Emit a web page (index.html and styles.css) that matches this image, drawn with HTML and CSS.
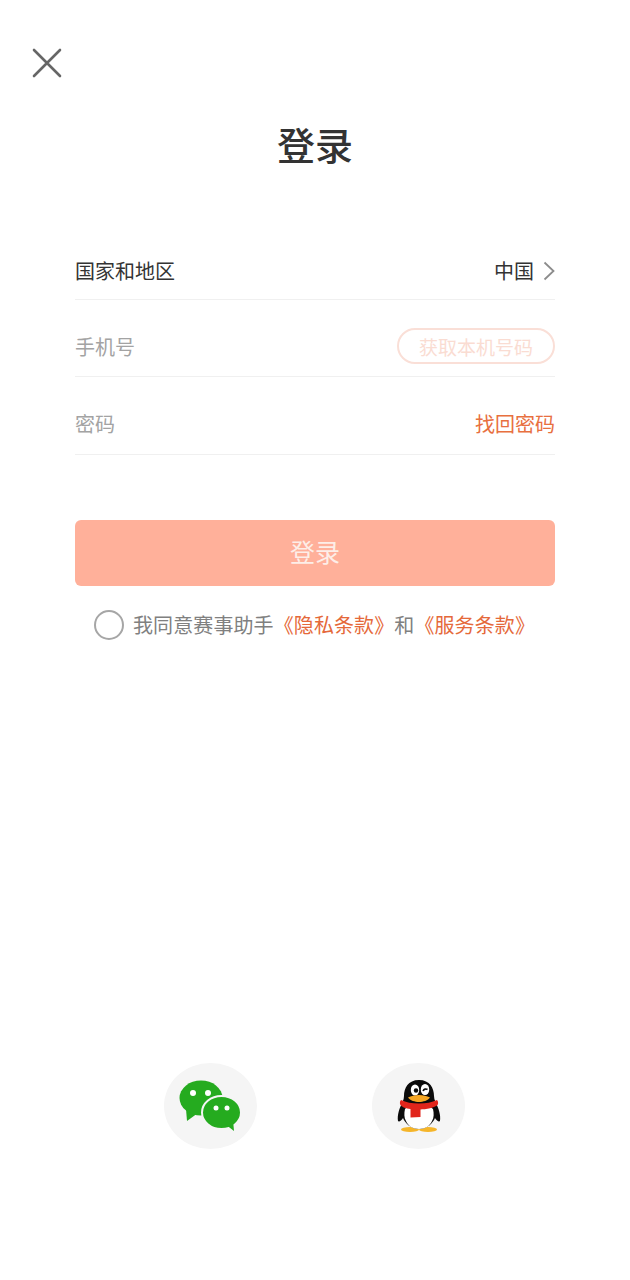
FILE: index.html
```html
<!DOCTYPE html>
<html lang="zh-CN">
<head>
  <meta charset="UTF-8" />
  <meta name="viewport" content="width=device-width, initial-scale=1.0">
  <title>登录</title>
  <link rel="stylesheet" href="styles.css">
</head>
<body>
  <div class="page">
    <div class="top">
      <svg class="close" width="30" height="30" viewBox="0 0 30 30">
        <path d="M2 2 L28 28 M28 2 L2 28" stroke="#666" stroke-width="2.6" stroke-linecap="round" fill="none"/>
      </svg>
    </div>

    <h1 class="title">登录</h1>

    <div class="form">
      <div class="row row-first">
        <span class="label">国家和地区</span>
        <span class="country">中国
          <svg width="12" height="20" viewBox="0 0 12 20">
            <path d="M1.500 1.500 L10.500 10 L1.500 18.500" stroke="#8c8c8c" stroke-width="1.800" fill="none"/>
          </svg>
        </span>
      </div>
      <div class="row">
        <span class="label muted">手机号</span>
        <span class="local-btn">获取本机号码</span>
      </div>
      <div class="row">
        <span class="label muted">密码</span>
        <span class="link">找回密码</span>
      </div>
    </div>

    <button class="submit">登录</button>

    <div class="agree">
      <span class="radio"></span>
      <span class="agree-text">我同意赛事助手<span class="orange">《隐私条款》</span>和<span class="orange">《服务条款》</span></span>
    </div>

    <div class="social">
      <div class="social-btn">
        <svg width="62" height="52" viewBox="0 0 62 52">
          <path d="M7 29 L8 41 L19 33 Z" fill="#25ab1f"/>
          <ellipse cx="22" cy="18" rx="21.500" ry="17.500" fill="#25ab1f"/>
          <ellipse cx="42.500" cy="32.500" rx="19.500" ry="16.500" fill="#25ab1f" stroke="#f5f5f5" stroke-width="2"/>
          <path d="M46 44 L55 51 L54 40 Z" fill="#25ab1f"/>
          <circle cx="14" cy="13" r="3" fill="#fff"/>
          <circle cx="29" cy="13" r="3" fill="#fff"/>
          <circle cx="37" cy="28" r="2.500" fill="#fff"/>
          <circle cx="48" cy="28" r="2.500" fill="#fff"/>
        </svg>
      </div>
      <div class="social-btn">
        <svg width="46" height="54" viewBox="-1 0 46 54">
          <ellipse cx="14" cy="50.500" rx="9" ry="2.500" fill="#f5b52a"/>
          <ellipse cx="32" cy="50.500" rx="9" ry="2.500" fill="#f5b52a"/>
          <path d="M23 1C12 1 8 9 8 17c0 2-.5 4-1.500 6C3.500 29 1 36 2 42c1 1.500 4-1 5-3 2 5 8 11 16 11s14-6 16-11c1 2 4 4.500 5 3 1-6-1.500-13-4.500-19-1-2-1.500-4-1.500-6C38 9 34 1 23 1z" fill="#0b0b0b"/>
          <path d="M9 30c3-3 8-5 14-5s11 2 14 5c1 4 1 9-1 12-2 5-7 8-13 8s-11-3-13-8c-2-3-2-8-1-12z" fill="#fff"/>
          <path d="M5 21c5 2.500 11 3.500 18 3.500s13-1 18-3.500c1.500 1.500 1.500 4.500 0 5.500-3 2-7 3-11 3.500-1.500.2-3 .3-5.500.4V38l-10 .5V30C10 29.500 6 28 5 26.500c-1.500-1-1.500-4 0-5.500z" fill="#e1251b"/>
          <ellipse cx="19" cy="11" rx="4.200" ry="5.500" fill="#fff"/>
          <circle cx="20" cy="11.500" r="2.200" fill="#0b0b0b"/>
          <ellipse cx="29" cy="10.500" rx="4.200" ry="5.500" fill="#fff"/>
          <path d="M27 12c1-2 3-2.500 4.500-1.500" stroke="#0b0b0b" stroke-width="1.600" fill="none"/>
          <path d="M12 18.500c3-1.500 7-2.500 11-2.500s8 1 11 2.500c-2 3-7 4.500-11 4.500s-9-1.500-11-4.500z" fill="#f5a623"/>
        </svg>
      </div>
    </div>
  </div>
</body>
</html>
```

FILE: styles.css
```css
body {
  margin: 0;
  background: #fff;
  font-family: "Noto Sans CJK SC", "Noto Sans", sans-serif;
  color: #333;
}

.page {
  width: 630px;
  height: 1280px;
  padding: 0 75px;
  box-sizing: border-box;
  overflow: hidden;
}

.top {
  height: 120px;
  padding-top: 48px;
  margin-left: -43px;
  box-sizing: border-box;
}

.close {
  display: block;
}

.title {
  margin: 0;
  height: 102px;
  line-height: 48px;
  font-size: 38px;
  font-weight: 500;
  text-align: center;
  color: #333;
}

.row {
  height: 77.500px;
  box-sizing: border-box;
  padding-top: 17px;
  border-bottom: 1px solid #f0f0f0;
  display: flex;
  align-items: center;
  justify-content: space-between;
  font-size: 20px;
}

.row-first {
  padding-top: 21px;
}

.label {
  color: #333;
}

.muted {
  color: #a3a3a3;
}

.country {
  display: flex;
  align-items: center;
  gap: 9px;
  color: #333;
}

.local-btn {
  width: 158px;
  height: 36px;
  box-sizing: border-box;
  border: 2px solid #fadfd7;
  border-radius: 18px;
  display: flex;
  align-items: center;
  justify-content: center;
  color: #fadcd2;
  font-size: 19px;
}

.link {
  color: #e8703f;
}

.submit {
  display: block;
  width: 100%;
  height: 66px;
  margin-top: 65px;
  padding: 0 0 3px;
  border: none;
  border-radius: 6px;
  background: #ffb09a;
  color: #fdeee8;
  font-family: inherit;
  font-size: 25px;
}

.agree {
  display: flex;
  align-items: center;
  gap: 9px;
  margin: 24px 0 0 19px;
  font-size: 20px;
  letter-spacing: 0.1px;
  color: #808080;
  white-space: nowrap;
}

.radio {
  width: 30px;
  height: 30px;
  flex: none;
  box-sizing: border-box;
  border: 2px solid #a6a6a6;
  border-radius: 50%;
}

.orange {
  color: #e5693a;
}

.social {
  display: flex;
  justify-content: center;
  gap: 115px;
  margin: 423px 0 0 -2px;
}

.social-btn {
  width: 93px;
  height: 86px;
  border-radius: 50%;
  background: #f5f5f5;
  display: flex;
  align-items: center;
  justify-content: center;
}
```
